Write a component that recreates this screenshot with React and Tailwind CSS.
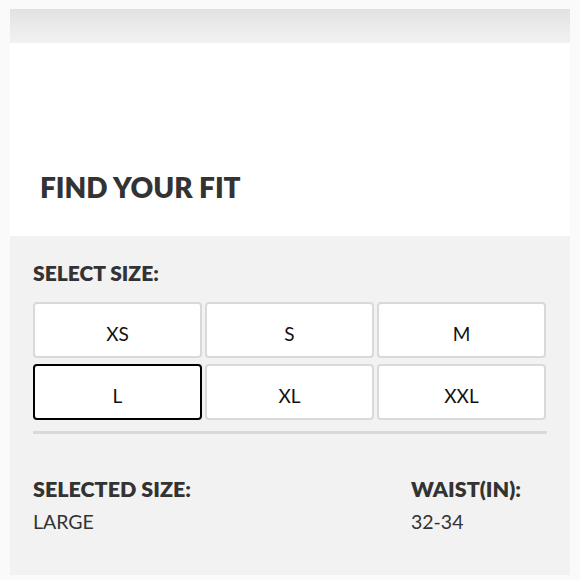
const sizes = ['XS', 'S', 'M', 'L', 'XL', 'XXL'];

export default function App() {
  const selected = 'L';
  return (
    <div className="h-[580px] w-[580px] bg-[#fafafa] pt-[9px] font-['Lato',sans-serif]">
      <div className="mx-[10px] h-[34px] bg-gradient-to-b from-[#e2e2e2] to-[#f2f2f2]" />
      <div className="mx-[10px] flex h-[193px] items-end bg-white pb-[35px] pl-[30px]">
        <h1 className="text-[28px] font-extrabold leading-none text-[#333]">FIND YOUR FIT</h1>
      </div>
      <div className="mx-[10px] h-[339px] bg-[#f2f2f2] px-[23px] pt-[26px]">
        <h2 className="text-[21px] font-extrabold leading-none text-[#333]">SELECT SIZE:</h2>
        <div className="mt-[19px] grid w-[513px] grid-cols-3 gap-x-[3px] gap-y-[6px]">
          {sizes.map((s) => (
            <button
              key={s}
              className={`flex h-[56px] items-center justify-center rounded-[4px] border-2 bg-white pt-[6px] text-[19px] leading-none text-[#111] ${
                s === selected ? 'border-black' : 'border-[#d9d9d9]'
              }`}
            >
              {s}
            </button>
          ))}
        </div>
        <div className="mt-[11px] h-[3px] w-[514px] bg-[#d9d9d9]" />
        <div className="mt-[45px] flex">
          <div className="w-[378px]">
            <div className="text-[21.5px] font-extrabold leading-none text-[#333]">SELECTED SIZE:</div>
            <div className="mt-[11px] text-[19.5px] leading-none text-[#333]">LARGE</div>
          </div>
          <div>
            <div className="text-[21.5px] font-extrabold leading-none text-[#333]">WAIST(IN):</div>
            <div className="mt-[11px] text-[19.5px] leading-none text-[#333]">32-34</div>
          </div>
        </div>
      </div>
    </div>
  );
}
